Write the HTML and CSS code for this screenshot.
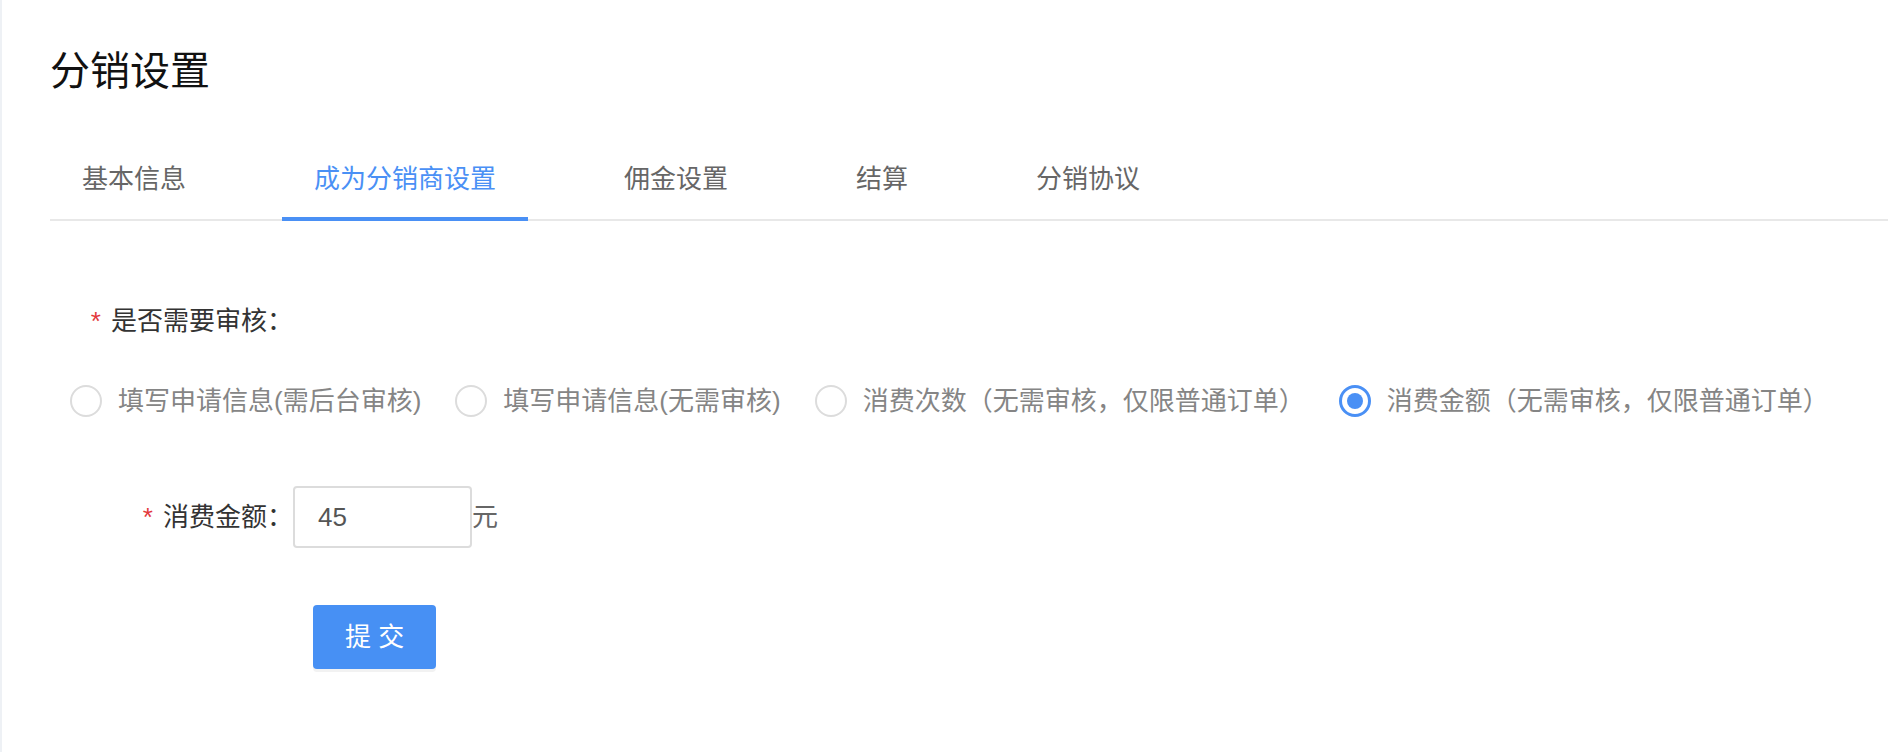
FILE: index.html
```html
<!DOCTYPE html>
<html lang="zh-CN">
<head>
<meta charset="utf-8">
<title>分销设置</title>
<link rel="stylesheet" href="styles.css">
</head>
<body>
<div class="page">
  <h1 class="title">分销设置</h1>
  <nav class="tabs">
    <div class="tab">基本信息</div>
    <div class="tab active">成为分销商设置</div>
    <div class="tab">佣金设置</div>
    <div class="tab">结算</div>
    <div class="tab">分销协议</div>
  </nav>
  <form class="form">
    <div class="row row-audit">
      <label class="label"><span class="req">*</span>是否需要审核：</label>
    </div>
    <div class="radios">
      <label class="radio"><span class="circle"></span><span class="rtext">填写申请信息(需后台审核)</span></label>
      <label class="radio"><span class="circle"></span><span class="rtext">填写申请信息(无需审核)</span></label>
      <label class="radio"><span class="circle"></span><span class="rtext">消费次数（无需审核，仅限普通订单）</span></label>
      <label class="radio checked"><span class="circle"></span><span class="rtext">消费金额（无需审核，仅限普通订单）</span></label>
    </div>
    <div class="row row-amount">
      <label class="label"><span class="req">*</span>消费金额：</label>
      <div class="input">45</div>
      <span class="unit">元</span>
    </div>
    <div class="actions">
      <button type="button" class="btn">提 交</button>
    </div>
  </form>
</div>
</body>
</html>
```
FILE: styles.css
```css
html, body {
  margin: 0;
  padding: 0;
  background: #ffffff;
}
body {
  font-family: "Liberation Sans", "Noto Sans CJK SC", sans-serif;
  color: #333333;
}
.page {
  min-height: 752px;
  box-sizing: border-box;
  border-left: 2px solid #eef1f5;
  padding: 43px 0 0 48px;
}
.title {
  margin: 0;
  font-size: 40px;
  line-height: 56px;
  font-weight: normal;
  color: #111111;
}
.tabs {
  display: flex;
  gap: 64px;
  margin-top: 62px;
  border-bottom: 2px solid #e8e8e8;
}
.tab {
  font-size: 26px;
  line-height: 36px;
  padding: 0 32px 20px;
  color: #666666;
  border-bottom: 4px solid transparent;
  margin-bottom: -2px;
}
.tab.active {
  color: #4a90f5;
  border-bottom-color: #4a90f5;
}
.form {
  margin-top: 82px;
}
.row {
  display: flex;
  align-items: center;
}
.label {
  width: 243px;
  box-sizing: border-box;
  text-align: right;
  font-size: 26px;
  line-height: 36px;
  color: #333333;
}
.req {
  color: #e3393c;
  margin-right: 10px;
}
.radios {
  display: flex;
  align-items: center;
  margin: 44px 0 0 20px;
  height: 36px;
}
.radio {
  display: flex;
  align-items: center;
  gap: 16px;
  margin-right: 34px;
}
.circle {
  width: 32px;
  height: 32px;
  box-sizing: border-box;
  border: 2px solid #dcdcdc;
  border-radius: 50%;
  display: flex;
  align-items: center;
  justify-content: center;
}
.radio.checked .circle {
  border: 3px solid #4a90f5;
}
.radio.checked .circle::after {
  content: "";
  width: 16px;
  height: 16px;
  border-radius: 50%;
  background: #4a90f5;
}
.rtext {
  font-size: 26px;
  line-height: 36px;
  color: #858585;
  white-space: nowrap;
}
.row-amount {
  margin-top: 67px;
}
.input {
  width: 179px;
  height: 62px;
  box-sizing: border-box;
  border: 2px solid #dcdcdc;
  border-radius: 4px;
  padding-left: 23px;
  font-size: 26px;
  line-height: 58px;
  color: #555555;
}
.unit {
  font-size: 26px;
  color: #666666;
  line-height: 36px;
}
.actions {
  margin: 57px 0 0 263px;
}
.btn {
  height: 64px;
  padding: 0 32px;
  border: none;
  border-radius: 4px;
  background: #4790f4;
  color: #ffffff;
  font-family: "Liberation Sans", "Noto Sans CJK SC", sans-serif;
  font-size: 26px;
  line-height: 64px;
  box-shadow: 0 3px 0 #f2f2f2;
  cursor: pointer;
}
```
